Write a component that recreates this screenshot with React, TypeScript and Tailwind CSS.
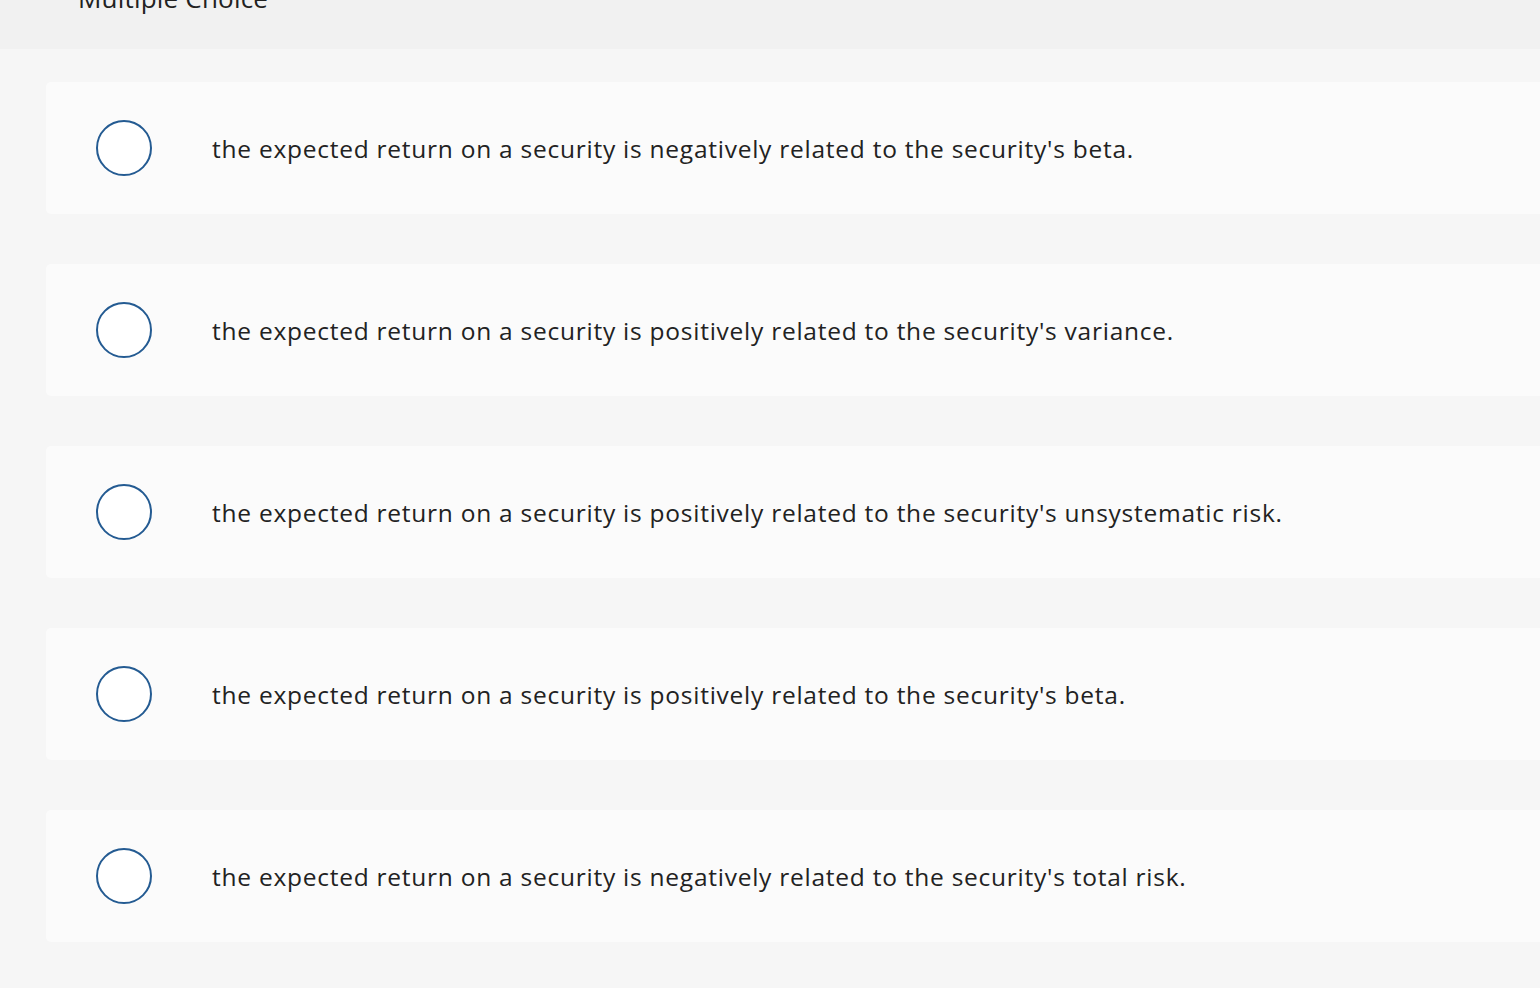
const choices = [
  "the expected return on a security is negatively related to the security's beta.",
  "the expected return on a security is positively related to the security's variance.",
  "the expected return on a security is positively related to the security's unsystematic risk.",
  "the expected return on a security is positively related to the security's beta.",
  "the expected return on a security is negatively related to the security's total risk.",
];

export default function App() {
  return (
    <div className="min-h-[988px] overflow-hidden bg-[#f6f6f6] font-['Open_Sans',sans-serif] text-[#222]">
      <div className="h-[49px] overflow-hidden bg-[#f1f1f1]">
        <h2 className="ml-[78px] mt-[-20px] text-[26px] leading-[36px] tracking-[0.2px]">
          Multiple Choice
        </h2>
      </div>
      <div className="flex flex-col gap-[50px] pl-[46px] pt-[33px]">
        {choices.map((c) => (
          <label
            key={c}
            className="flex h-[132px] items-center rounded-l-[5px] bg-[#fbfbfb]"
          >
            <span className="ml-[50px] h-[56px] w-[56px] shrink-0 rounded-full border-2 border-[#245b92] bg-white" />
            <span className="ml-[60px] pt-[2px] text-[24.5px] tracking-[0.75px]">{c}</span>
          </label>
        ))}
      </div>
    </div>
  );
}
